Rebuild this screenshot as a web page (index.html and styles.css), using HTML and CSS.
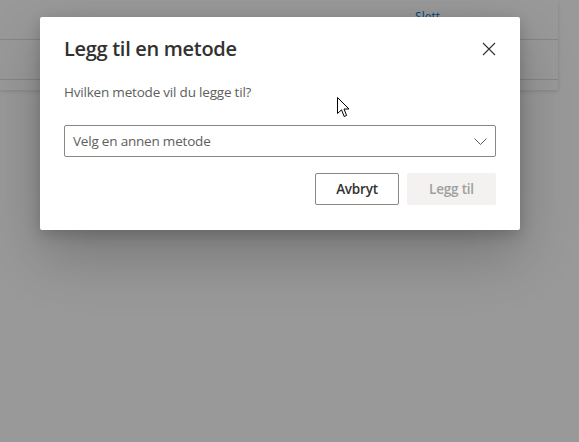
FILE: index.html
```html
<!DOCTYPE html>
<html lang="no">
<head>
<meta charset="utf-8">
<link rel="stylesheet" href="styles.css">
</head>
<body>
<div class="page">
  <div class="card">
    <div class="card-row"><a class="link">Slett</a></div>
    <div class="card-row"></div>
  </div>
</div>
<div class="overlay"></div>
<div class="dialog" role="dialog">
  <div class="dialog-head">
    <h1 class="title">Legg til en metode</h1>
    <button class="close" aria-label="Lukk">
      <svg width="14" height="14" viewBox="0 0 14 14"><path d="M1 1 L13 13 M13 1 L1 13" stroke="#323130" stroke-width="1.1" fill="none"/></svg>
    </button>
  </div>
  <p class="question">Hvilken metode vil du legge til?</p>
  <div class="select">
    <span class="select-text">Velg en annen metode</span>
    <svg class="chev" width="13" height="7" viewBox="0 0 13 7"><path d="M0.5 0.5 L6.5 6.5 L12.5 0.5" stroke="#605e5c" stroke-width="1" fill="none"/></svg>
  </div>
  <div class="actions">
    <button class="btn btn-default">Avbryt</button>
    <button class="btn btn-disabled" disabled>Legg til</button>
  </div>
</div>
<svg class="cursor" width="13" height="21" viewBox="0 0 13 21"><path d="M0.5 0.5 L0.5 16.5 L4.5 12.8 L7.2 19.5 L9.6 18.5 L7 12 L12 12 Z" fill="#fff" stroke="#000" stroke-width="1" stroke-linejoin="miter"/></svg>
</body>
</html>
```
FILE: styles.css
```css
html, body { margin: 0; padding: 0; }
body {
  width: 579px;
  height: 442px;
  overflow: hidden;
  background: #ffffff;
  font-family: "Open Sans", "Noto Sans", sans-serif;
  position: relative;
}
.page { padding: 0; }
.card {
  width: 558px;
  height: 90px;
  background: #fff;
  box-shadow: 0 1.6px 3.6px rgba(0,0,0,0.13), 0 0.3px 0.9px rgba(0,0,0,0.11);
}
.card-row {
  height: 39px;
  border-bottom: 1px solid #e1dfdd;
  display: flex;
  justify-content: flex-end;
  padding-right: 118px;
}
.link {
  color: #0078d4;
  font-size: 12px;
  line-height: 33px;
}
.overlay {
  position: absolute;
  inset: 0;
  background: rgba(0,0,0,0.4);
}
.dialog {
  position: absolute;
  left: 40px;
  top: 17px;
  width: 480px;
  box-sizing: border-box;
  padding: 20px 24px 25px 24px;
  background: #fff;
  border-radius: 2px;
  box-shadow: 0 25.6px 57.6px rgba(0,0,0,0.22), 0 4.8px 14.4px rgba(0,0,0,0.18);
}
.dialog-head {
  display: flex;
  justify-content: space-between;
  align-items: center;
}
.title {
  margin: 0;
  font-size: 20px;
  font-weight: 600;
  color: #323130;
  line-height: 24px;
  letter-spacing: -0.3px;
}
.close {
  border: 0;
  background: none;
  padding: 0;
  margin-right: 0;
  width: 14px;
  height: 14px;
  display: flex;
}
.question {
  margin: 21px 0 0 0;
  font-size: 13.5px;
  line-height: 20px;
  color: #605e5c;
  letter-spacing: -0.2px;
}
.select {
  margin-top: 23px;
  height: 32px;
  box-sizing: border-box;
  border: 1px solid #8a8886;
  border-radius: 2px;
  display: flex;
  align-items: center;
  justify-content: space-between;
  padding: 0 8px 0 8px;
}
.select-text {
  font-size: 13.5px;
  color: #605e5c;
  letter-spacing: -0.2px;
}
.chev { margin-right: 0; }
.actions {
  margin-top: 16px;
  display: flex;
  justify-content: flex-end;
  gap: 8px;
}
.btn {
  height: 32px;
  box-sizing: border-box;
  border-radius: 2px;
  font-family: inherit;
  font-size: 13.5px;
  font-weight: 600;
  padding: 0 16px;
  letter-spacing: -0.2px;
}
.btn-default {
  width: 84px;
  background: #fff;
  border: 1px solid #8a8886;
  color: #323130;
}
.btn-disabled {
  width: 89px;
  background: #f3f2f1;
  border: 1px solid #f3f2f1;
  color: #a19f9d;
}
.cursor {
  position: absolute;
  left: 337px;
  top: 97px;
}
```
